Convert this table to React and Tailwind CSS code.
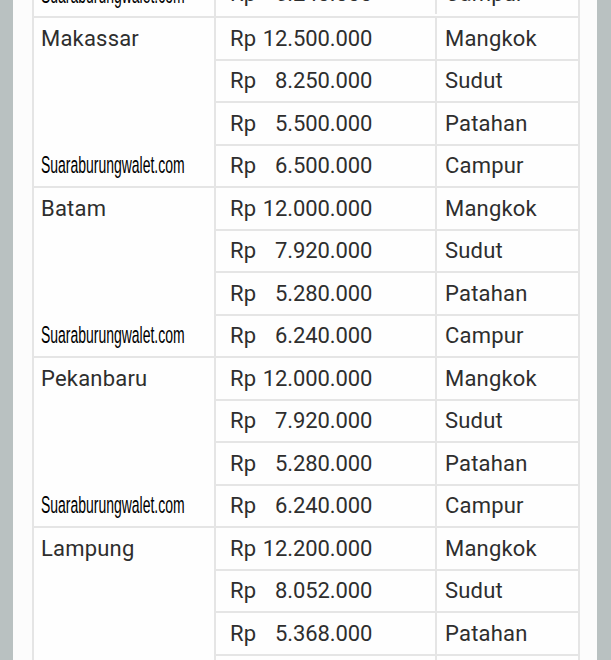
const groups = [
  {
    city: "Makassar",
    rows: [
      ["12.500.000", "Mangkok"],
      ["8.250.000", "Sudut"],
      ["5.500.000", "Patahan"],
      ["6.500.000", "Campur"],
    ],
  },
  {
    city: "Batam",
    rows: [
      ["12.000.000", "Mangkok"],
      ["7.920.000", "Sudut"],
      ["5.280.000", "Patahan"],
      ["6.240.000", "Campur"],
    ],
  },
  {
    city: "Pekanbaru",
    rows: [
      ["12.000.000", "Mangkok"],
      ["7.920.000", "Sudut"],
      ["5.280.000", "Patahan"],
      ["6.240.000", "Campur"],
    ],
  },
  {
    city: "Lampung",
    rows: [
      ["12.200.000", "Mangkok"],
      ["8.052.000", "Sudut"],
      ["5.368.000", "Patahan"],
      ["6.344.000", "Campur"],
    ],
  },
];

function Watermark() {
  return (
    <div className="h-[42.5px] flex items-center pl-[7px] pt-[2px]">
      <span className="inline-block origin-left scale-x-[0.57] whitespace-nowrap font-['Liberation_Sans',Arial,sans-serif] text-[24.5px] text-black">
        Suaraburungwalet.com
      </span>
    </div>
  );
}

function PriceRow({ price, type }) {
  return (
    <div className="flex h-[42.5px] border-t-2 border-[#e5e5e5]">
      <div className="w-[221px] flex items-center pl-[14px] border-r-2 border-[#e5e5e5]">
        <span className="tracking-[0.2px]">Rp</span>
        <span className="w-[116px] text-right tracking-[-0.1px]">{price}</span>
      </div>
      <div className="flex-1 flex items-center pl-[8px] tracking-[0.2px]">{type}</div>
    </div>
  );
}

function Group({ city, rows }) {
  return (
    <div className="flex">
      <div className="w-[182px] flex flex-col justify-between border-t-2 border-r-2 border-[#e5e5e5]">
        {city ? (
          <div className="h-[40.5px] flex items-center pl-[7px] tracking-[0.2px]">{city}</div>
        ) : (
          <div />
        )}
        <Watermark />
      </div>
      <div className="flex-1 flex flex-col">
        {rows.map(([p, t], i) => (
          <PriceRow key={i} price={p} type={t} />
        ))}
      </div>
    </div>
  );
}

export default function App() {
  return (
    <div className="h-[660px] overflow-hidden bg-[#b9c1c1] pl-[13px] pr-[14px]">
      <div className="h-full bg-[#fcfcfc] pl-[19px] pr-[17px] overflow-hidden">
        <div className="-mt-[28.5px] w-[548px] border-l-2 border-r-2 border-[#e5e5e5] bg-[#fefefe] font-['Roboto',sans-serif] text-[22px] text-[#2e2e2e]">
          <Group city={null} rows={[["6.240.000", "Campur"]]} />
          {groups.map((g) => (
            <Group key={g.city} city={g.city} rows={g.rows} />
          ))}
        </div>
      </div>
    </div>
  );
}
